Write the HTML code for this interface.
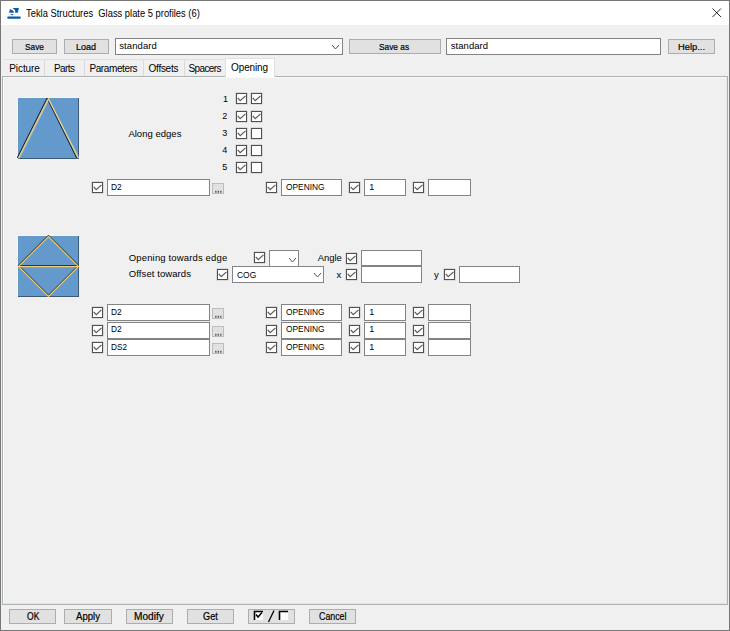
<!DOCTYPE html>
<html><head><meta charset="utf-8"><style>
*{margin:0;padding:0;box-sizing:border-box}
html,body{width:730px;height:631px;overflow:hidden;background:#f0f0f0;font-family:"Liberation Sans",sans-serif;color:#000}
.a{position:absolute}
.t{position:absolute;white-space:nowrap;line-height:20px}
.btn{position:absolute;background:#e1e1e1;border:1px solid #adadad}
.tb{position:absolute;background:#fff;border:1px solid #838383}
.cb{position:absolute;width:11px;height:11px;border:1px solid #505050;background:#fff;box-shadow:0 0 0 0.4px rgba(80,80,80,.35)}
.cb svg{position:absolute;left:0;top:0}
</style></head><body>
<div class="a" style="left:0;top:0;width:730px;height:631px;border:1px solid #777;"></div>
<div class="a" style="left:1px;top:1px;width:728px;height:24px;background:#fff"></div>
<svg class="a" style="left:0px;top:0px" width="24" height="22" viewBox="0 0 24 22">
<path d="M9.9,9 L13.6,10.9 L13.75,12.65 L9.2,12.65 Z" fill="#0b5aa2"/>
<path d="M12.4,8.1 L18.9,8.1 L17.8,12.65 L15.3,12.65 L15,10 Z" fill="#0b5aa2"/>
<path d="M10.4,14 L13.75,14 L12,15.5 Z" fill="#0b5aa2"/>
<rect x="7.2" y="16.4" width="13.6" height="2.4" rx="1" fill="#0b5aa2"/>
</svg>
<div class="t" style="left:25.50px;top:2.86px;font-size:10.5px;transform:scaleX(0.8916);transform-origin:0.00px 0;color:#000;">Tekla&nbsp;Structures&nbsp;&nbsp;Glass&nbsp;plate&nbsp;5&nbsp;profiles&nbsp;(6)</div>
<svg class="a" style="left:712px;top:8px" width="10" height="10"><path d="M0.5,0.5 L9,9 M9,0.5 L0.5,9" stroke="#222" stroke-width="0.95"/></svg>
<div class="btn" style="left:12px;top:39px;width:45px;height:15px"></div>
<div class="t" style="left:24.90px;top:37.21px;font-size:9.5px;transform:scaleX(0.8726);transform-origin:0.00px 0;color:#000;-webkit-text-stroke:0.2px #000">Save</div>
<div class="btn" style="left:64px;top:39px;width:45px;height:15px"></div>
<div class="t" style="left:76.30px;top:37.21px;font-size:9.5px;transform:scaleX(0.9462);transform-origin:0.00px 0;color:#000;-webkit-text-stroke:0.2px #000">Load</div>
<div class="tb" style="left:115px;top:38px;width:228px;height:17px"></div>
<div class="t" style="left:119.30px;top:36.21px;font-size:9.5px;letter-spacing:0.078px;color:#000;">standard</div>
<svg class="a" style="left:331px;top:44px" width="9" height="6"><polyline points="1,1 4.5,5 8,1" fill="none" stroke="#555" stroke-width="1"/></svg>
<div class="btn" style="left:349px;top:39px;width:92px;height:15px"></div>
<div class="t" style="left:378.90px;top:37.21px;font-size:9.5px;transform:scaleX(0.8765);transform-origin:0.00px 0;color:#000;-webkit-text-stroke:0.2px #000">Save as</div>
<div class="tb" style="left:446px;top:38px;width:215px;height:17px"></div>
<div class="t" style="left:450.80px;top:36.21px;font-size:9.5px;letter-spacing:0.049px;color:#000;">standard</div>
<div class="btn" style="left:668px;top:39px;width:47px;height:15px"></div>
<div class="t" style="left:678.30px;top:37.21px;font-size:9.5px;transform:scaleX(0.9834);transform-origin:0.00px 0;color:#000;-webkit-text-stroke:0.2px #000">Help...</div>
<div class="a" style="left:4px;top:59px;width:222px;height:1px;background:#e0e0e0"></div>
<div class="a" style="left:44px;top:60px;width:1px;height:16px;background:#dadada"></div>
<div class="a" style="left:84px;top:60px;width:1px;height:16px;background:#dadada"></div>
<div class="a" style="left:143px;top:60px;width:1px;height:16px;background:#dadada"></div>
<div class="a" style="left:184px;top:60px;width:1px;height:16px;background:#dadada"></div>
<div class="a" style="left:2px;top:76px;width:726px;height:529px;border:1px solid #aab2b2;background:#f0f0f0"></div>
<div class="a" style="left:3px;top:77px;width:724px;height:527px;border-left:1px solid #fafafa;border-top:1px solid #fafafa;border-right:1px solid #e4e6e6;border-bottom:1px solid #e4e6e6"></div>
<div class="a" style="left:225px;top:58px;width:50px;height:19px;background:#fff;border:1px solid #e0e0e0;border-bottom:none"></div>
<div class="t" style="left:9.20px;top:59.03px;font-size:10px;letter-spacing:-0.067px;color:#000;">Picture</div>
<div class="t" style="left:53.90px;top:59.03px;font-size:10px;letter-spacing:-0.562px;color:#000;">Parts</div>
<div class="t" style="left:89.40px;top:59.03px;font-size:10px;letter-spacing:-0.389px;color:#000;">Parameters</div>
<div class="t" style="left:148.60px;top:59.03px;font-size:10px;letter-spacing:-0.283px;color:#000;">Offsets</div>
<div class="t" style="left:188.50px;top:59.03px;font-size:10px;letter-spacing:-0.617px;color:#000;">Spacers</div>
<div class="t" style="left:231.10px;top:58.03px;font-size:10px;letter-spacing:-0.133px;color:#000;">Opening</div>
<svg class="a" style="left:17px;top:97px" width="63" height="63" viewBox="0 0 63 63">
<rect x="0" y="0" width="62" height="62" fill="#f8f6f2"/>
<rect x="1" y="1" width="61" height="61" fill="#3c5a78"/>
<rect x="1" y="1" width="60" height="60" fill="#6499cc"/>
<polyline points="0.1,61 30.1,1" fill="none" stroke="#1a1a1a" stroke-width="1"/><polyline points="30.1,1.2 59.7,61" fill="none" stroke="#1a1a1a" stroke-width="1"/>
<polyline points="1.5,61.2 31.5,1.4 61.3,61.2" fill="none" stroke="#f0cc74" stroke-width="1.1"/>
<polyline points="2.5,61.2 31.7,3 62.3,61.2" fill="none" stroke="#fff0c8" stroke-width="0.6" opacity="0.6"/>
</svg>
<div class="t" style="left:128.40px;top:124.21px;font-size:9.5px;letter-spacing:0.018px;color:#000;">Along edges</div>
<div class="t" style="left:222.90px;top:89.38px;font-size:9px;letter-spacing:0.000px;color:#000;">1</div>
<div class="cb" style="left:235.5px;top:93px"><svg width="9" height="9" viewBox="0 0 9 9"><polyline points="0.7,3.9 3.2,6.7 8.5,1.9" fill="none" stroke="#5a5a5a" stroke-width="1.25"/></svg></div>
<div class="cb" style="left:250.5px;top:93px"><svg width="9" height="9" viewBox="0 0 9 9"><polyline points="0.7,3.9 3.2,6.7 8.5,1.9" fill="none" stroke="#5a5a5a" stroke-width="1.25"/></svg></div>
<div class="t" style="left:222.20px;top:106.38px;font-size:9px;letter-spacing:0.000px;color:#000;">2</div>
<div class="cb" style="left:235.5px;top:111px"><svg width="9" height="9" viewBox="0 0 9 9"><polyline points="0.7,3.9 3.2,6.7 8.5,1.9" fill="none" stroke="#5a5a5a" stroke-width="1.25"/></svg></div>
<div class="cb" style="left:250.5px;top:111px"><svg width="9" height="9" viewBox="0 0 9 9"><polyline points="0.7,3.9 3.2,6.7 8.5,1.9" fill="none" stroke="#5a5a5a" stroke-width="1.25"/></svg></div>
<div class="t" style="left:222.20px;top:123.38px;font-size:9px;letter-spacing:0.000px;color:#000;">3</div>
<div class="cb" style="left:235.5px;top:128px"><svg width="9" height="9" viewBox="0 0 9 9"><polyline points="0.7,3.9 3.2,6.7 8.5,1.9" fill="none" stroke="#5a5a5a" stroke-width="1.25"/></svg></div>
<div class="cb" style="left:250.5px;top:128px"></div>
<div class="t" style="left:222.20px;top:140.38px;font-size:9px;letter-spacing:0.000px;color:#000;">4</div>
<div class="cb" style="left:235.5px;top:145px"><svg width="9" height="9" viewBox="0 0 9 9"><polyline points="0.7,3.9 3.2,6.7 8.5,1.9" fill="none" stroke="#5a5a5a" stroke-width="1.25"/></svg></div>
<div class="cb" style="left:250.5px;top:145px"></div>
<div class="t" style="left:222.20px;top:157.38px;font-size:9px;letter-spacing:0.000px;color:#000;">5</div>
<div class="cb" style="left:235.5px;top:162px"><svg width="9" height="9" viewBox="0 0 9 9"><polyline points="0.7,3.9 3.2,6.7 8.5,1.9" fill="none" stroke="#5a5a5a" stroke-width="1.25"/></svg></div>
<div class="cb" style="left:250.5px;top:162px"></div>
<div class="cb" style="left:92px;top:182px"><svg width="9" height="9" viewBox="0 0 9 9"><polyline points="0.7,3.9 3.2,6.7 8.5,1.9" fill="none" stroke="#5a5a5a" stroke-width="1.25"/></svg></div>
<div class="tb" style="left:107px;top:179px;width:103px;height:17px"></div>
<div class="t" style="left:111.30px;top:177.38px;font-size:9px;transform:scaleX(0.9288);transform-origin:0.00px 0;color:#000;">D2</div>
<div class="btn" style="left:212px;top:183px;width:12px;height:11px;border-color:#bdbdbd"></div>
<svg class="a" style="left:212px;top:183px" width="12" height="11"><rect x="3.3" y="7.8" width="1.1" height="1.9" fill="#3a3050"/><rect x="5.7" y="7.8" width="1.1" height="1.9" fill="#3a3050"/><rect x="8.3" y="7.8" width="1.1" height="1.9" fill="#3a3050"/></svg>
<div class="cb" style="left:266px;top:182px"><svg width="9" height="9" viewBox="0 0 9 9"><polyline points="0.7,3.9 3.2,6.7 8.5,1.9" fill="none" stroke="#5a5a5a" stroke-width="1.25"/></svg></div>
<div class="tb" style="left:281px;top:179px;width:61px;height:17px"></div>
<div class="t" style="left:285.80px;top:177.38px;font-size:9px;transform:scaleX(0.9303);transform-origin:0.00px 0;color:#000;">OPENING</div>
<div class="cb" style="left:349px;top:182px"><svg width="9" height="9" viewBox="0 0 9 9"><polyline points="0.7,3.9 3.2,6.7 8.5,1.9" fill="none" stroke="#5a5a5a" stroke-width="1.25"/></svg></div>
<div class="tb" style="left:364px;top:179px;width:42px;height:17px"></div>
<div class="t" style="left:369.20px;top:177.38px;font-size:9px;letter-spacing:0.000px;color:#000;">1</div>
<div class="cb" style="left:413px;top:182px"><svg width="9" height="9" viewBox="0 0 9 9"><polyline points="0.7,3.9 3.2,6.7 8.5,1.9" fill="none" stroke="#5a5a5a" stroke-width="1.25"/></svg></div>
<div class="tb" style="left:428px;top:179px;width:43px;height:17px"></div>
<svg class="a" style="left:17px;top:235px" width="63" height="63" viewBox="0 0 63 63">
<rect x="0" y="0" width="62" height="62" fill="#f8f6f2"/>
<rect x="1" y="1" width="61" height="61" fill="#3c5a78"/>
<rect x="1" y="1" width="60" height="60" fill="#6499cc"/>
<polygon points="31.5,0.2 61.5,30.2 31.5,60.2 1.5,30.2" fill="none" stroke="#1a1a1a" stroke-width="1"/>
<line x1="1" y1="30.5" x2="61" y2="30.5" stroke="#2a2a2a" stroke-width="0.9"/>
<polygon points="31.5,1.5 61.5,31.5 31.5,61.5 1.5,31.5" fill="none" stroke="#f0cc74" stroke-width="1.1"/>
<line x1="1.5" y1="31.7" x2="61" y2="31.7" stroke="#f0cc74" stroke-width="1.2"/>
</svg>
<div class="t" style="left:128.80px;top:248.21px;font-size:9.5px;letter-spacing:0.146px;color:#000;">Opening towards edge</div>
<div class="t" style="left:128.80px;top:264.21px;font-size:9.5px;letter-spacing:0.086px;color:#000;">Offset towards</div>
<div class="cb" style="left:254px;top:252px"><svg width="9" height="9" viewBox="0 0 9 9"><polyline points="0.7,3.9 3.2,6.7 8.5,1.9" fill="none" stroke="#5a5a5a" stroke-width="1.25"/></svg></div>
<div class="tb" style="left:269px;top:250px;width:30px;height:17px"></div>
<svg class="a" style="left:287.5px;top:256.5px" width="9" height="6"><polyline points="1,1 4.5,5 8,1" fill="none" stroke="#555" stroke-width="1"/></svg>
<div class="t" style="left:317.80px;top:248.21px;font-size:9.5px;letter-spacing:-0.055px;color:#000;">Angle</div>
<div class="cb" style="left:345.5px;top:252.5px"><svg width="9" height="9" viewBox="0 0 9 9"><polyline points="0.7,3.9 3.2,6.7 8.5,1.9" fill="none" stroke="#5a5a5a" stroke-width="1.25"/></svg></div>
<div class="tb" style="left:360.5px;top:250px;width:61px;height:16px"></div>
<div class="cb" style="left:217px;top:269px"><svg width="9" height="9" viewBox="0 0 9 9"><polyline points="0.7,3.9 3.2,6.7 8.5,1.9" fill="none" stroke="#5a5a5a" stroke-width="1.25"/></svg></div>
<div class="tb" style="left:232px;top:266px;width:92px;height:17px"></div>
<div class="t" style="left:236.70px;top:265.21px;font-size:9.5px;transform:scaleX(0.8910);transform-origin:0.00px 0;color:#000;">COG</div>
<svg class="a" style="left:312.5px;top:272px" width="9" height="6"><polyline points="1,1 4.5,5 8,1" fill="none" stroke="#555" stroke-width="1"/></svg>
<div class="t" style="left:336.50px;top:265.21px;font-size:9.5px;letter-spacing:0.000px;color:#000;">x</div>
<div class="cb" style="left:345.5px;top:269px"><svg width="9" height="9" viewBox="0 0 9 9"><polyline points="0.7,3.9 3.2,6.7 8.5,1.9" fill="none" stroke="#5a5a5a" stroke-width="1.25"/></svg></div>
<div class="tb" style="left:360.5px;top:266px;width:61px;height:17px"></div>
<div class="t" style="left:433.90px;top:265.21px;font-size:9.5px;letter-spacing:0.000px;color:#000;">y</div>
<div class="cb" style="left:444px;top:269px"><svg width="9" height="9" viewBox="0 0 9 9"><polyline points="0.7,3.9 3.2,6.7 8.5,1.9" fill="none" stroke="#5a5a5a" stroke-width="1.25"/></svg></div>
<div class="tb" style="left:459px;top:266px;width:61px;height:17px"></div>
<div class="cb" style="left:92px;top:307px"><svg width="9" height="9" viewBox="0 0 9 9"><polyline points="0.7,3.9 3.2,6.7 8.5,1.9" fill="none" stroke="#5a5a5a" stroke-width="1.25"/></svg></div>
<div class="tb" style="left:107px;top:304px;width:103px;height:17px"></div>
<div class="t" style="left:111.30px;top:302.38px;font-size:9px;transform:scaleX(0.9288);transform-origin:0.00px 0;color:#000;">D2</div>
<div class="btn" style="left:212px;top:308px;width:12px;height:11px;border-color:#bdbdbd"></div>
<svg class="a" style="left:212px;top:308px" width="12" height="11"><rect x="3.3" y="7.8" width="1.1" height="1.9" fill="#3a3050"/><rect x="5.7" y="7.8" width="1.1" height="1.9" fill="#3a3050"/><rect x="8.3" y="7.8" width="1.1" height="1.9" fill="#3a3050"/></svg>
<div class="cb" style="left:266px;top:307px"><svg width="9" height="9" viewBox="0 0 9 9"><polyline points="0.7,3.9 3.2,6.7 8.5,1.9" fill="none" stroke="#5a5a5a" stroke-width="1.25"/></svg></div>
<div class="tb" style="left:281px;top:304px;width:61px;height:17px"></div>
<div class="t" style="left:285.80px;top:302.38px;font-size:9px;transform:scaleX(0.9303);transform-origin:0.00px 0;color:#000;">OPENING</div>
<div class="cb" style="left:349px;top:307px"><svg width="9" height="9" viewBox="0 0 9 9"><polyline points="0.7,3.9 3.2,6.7 8.5,1.9" fill="none" stroke="#5a5a5a" stroke-width="1.25"/></svg></div>
<div class="tb" style="left:364px;top:304px;width:42px;height:17px"></div>
<div class="t" style="left:369.20px;top:302.38px;font-size:9px;letter-spacing:0.000px;color:#000;">1</div>
<div class="cb" style="left:413px;top:307px"><svg width="9" height="9" viewBox="0 0 9 9"><polyline points="0.7,3.9 3.2,6.7 8.5,1.9" fill="none" stroke="#5a5a5a" stroke-width="1.25"/></svg></div>
<div class="tb" style="left:428px;top:304px;width:43px;height:17px"></div>
<div class="cb" style="left:92px;top:324.5px"><svg width="9" height="9" viewBox="0 0 9 9"><polyline points="0.7,3.9 3.2,6.7 8.5,1.9" fill="none" stroke="#5a5a5a" stroke-width="1.25"/></svg></div>
<div class="tb" style="left:107px;top:321.5px;width:103px;height:17px"></div>
<div class="t" style="left:111.30px;top:319.38px;font-size:9px;transform:scaleX(0.9288);transform-origin:0.00px 0;color:#000;">D2</div>
<div class="btn" style="left:212px;top:325.5px;width:12px;height:11px;border-color:#bdbdbd"></div>
<svg class="a" style="left:212px;top:325.5px" width="12" height="11"><rect x="3.3" y="7.8" width="1.1" height="1.9" fill="#3a3050"/><rect x="5.7" y="7.8" width="1.1" height="1.9" fill="#3a3050"/><rect x="8.3" y="7.8" width="1.1" height="1.9" fill="#3a3050"/></svg>
<div class="cb" style="left:266px;top:324.5px"><svg width="9" height="9" viewBox="0 0 9 9"><polyline points="0.7,3.9 3.2,6.7 8.5,1.9" fill="none" stroke="#5a5a5a" stroke-width="1.25"/></svg></div>
<div class="tb" style="left:281px;top:321.5px;width:61px;height:17px"></div>
<div class="t" style="left:285.80px;top:319.38px;font-size:9px;transform:scaleX(0.9303);transform-origin:0.00px 0;color:#000;">OPENING</div>
<div class="cb" style="left:349px;top:324.5px"><svg width="9" height="9" viewBox="0 0 9 9"><polyline points="0.7,3.9 3.2,6.7 8.5,1.9" fill="none" stroke="#5a5a5a" stroke-width="1.25"/></svg></div>
<div class="tb" style="left:364px;top:321.5px;width:42px;height:17px"></div>
<div class="t" style="left:369.20px;top:319.38px;font-size:9px;letter-spacing:0.000px;color:#000;">1</div>
<div class="cb" style="left:413px;top:324.5px"><svg width="9" height="9" viewBox="0 0 9 9"><polyline points="0.7,3.9 3.2,6.7 8.5,1.9" fill="none" stroke="#5a5a5a" stroke-width="1.25"/></svg></div>
<div class="tb" style="left:428px;top:321.5px;width:43px;height:17px"></div>
<div class="cb" style="left:92px;top:342px"><svg width="9" height="9" viewBox="0 0 9 9"><polyline points="0.7,3.9 3.2,6.7 8.5,1.9" fill="none" stroke="#5a5a5a" stroke-width="1.25"/></svg></div>
<div class="tb" style="left:107px;top:339px;width:103px;height:17px"></div>
<div class="t" style="left:111.30px;top:337.38px;font-size:9px;transform:scaleX(0.9140);transform-origin:0.00px 0;color:#000;">DS2</div>
<div class="btn" style="left:212px;top:343px;width:12px;height:11px;border-color:#bdbdbd"></div>
<svg class="a" style="left:212px;top:343px" width="12" height="11"><rect x="3.3" y="7.8" width="1.1" height="1.9" fill="#3a3050"/><rect x="5.7" y="7.8" width="1.1" height="1.9" fill="#3a3050"/><rect x="8.3" y="7.8" width="1.1" height="1.9" fill="#3a3050"/></svg>
<div class="cb" style="left:266px;top:342px"><svg width="9" height="9" viewBox="0 0 9 9"><polyline points="0.7,3.9 3.2,6.7 8.5,1.9" fill="none" stroke="#5a5a5a" stroke-width="1.25"/></svg></div>
<div class="tb" style="left:281px;top:339px;width:61px;height:17px"></div>
<div class="t" style="left:285.80px;top:337.38px;font-size:9px;transform:scaleX(0.9303);transform-origin:0.00px 0;color:#000;">OPENING</div>
<div class="cb" style="left:349px;top:342px"><svg width="9" height="9" viewBox="0 0 9 9"><polyline points="0.7,3.9 3.2,6.7 8.5,1.9" fill="none" stroke="#5a5a5a" stroke-width="1.25"/></svg></div>
<div class="tb" style="left:364px;top:339px;width:42px;height:17px"></div>
<div class="t" style="left:369.20px;top:337.38px;font-size:9px;letter-spacing:0.000px;color:#000;">1</div>
<div class="cb" style="left:413px;top:342px"><svg width="9" height="9" viewBox="0 0 9 9"><polyline points="0.7,3.9 3.2,6.7 8.5,1.9" fill="none" stroke="#5a5a5a" stroke-width="1.25"/></svg></div>
<div class="tb" style="left:428px;top:339px;width:43px;height:17px"></div>
<div class="btn" style="left:9px;top:609px;width:47px;height:15px"></div>
<div class="t" style="left:26.70px;top:607.03px;font-size:10px;transform:scaleX(0.8581);transform-origin:0.00px 0;color:#000;-webkit-text-stroke:0.2px #000">OK</div>
<div class="btn" style="left:64px;top:609px;width:48px;height:15px"></div>
<div class="t" style="left:76.20px;top:607.03px;font-size:10px;transform:scaleX(0.9600);transform-origin:0.00px 0;color:#000;-webkit-text-stroke:0.2px #000">Apply</div>
<div class="btn" style="left:126px;top:609px;width:47px;height:15px"></div>
<div class="t" style="left:134.30px;top:607.03px;font-size:10px;transform:scaleX(1.0119);transform-origin:0.00px 0;color:#000;-webkit-text-stroke:0.2px #000">Modify</div>
<div class="btn" style="left:187px;top:609px;width:47px;height:15px"></div>
<div class="t" style="left:202.70px;top:607.03px;font-size:10px;transform:scaleX(0.9193);transform-origin:0.00px 0;color:#000;-webkit-text-stroke:0.2px #000">Get</div>
<div class="btn" style="left:309px;top:609px;width:47px;height:15px"></div>
<div class="t" style="left:318.60px;top:607.03px;font-size:10px;transform:scaleX(0.8828);transform-origin:0.00px 0;color:#000;-webkit-text-stroke:0.2px #000">Cancel</div>
<div class="btn" style="left:248px;top:609px;width:47px;height:15px"></div>
<svg class="a" style="left:253px;top:610px" width="38" height="13" viewBox="0 0 38 13">
<rect x="1" y="1" width="9" height="9" fill="#fff"/>
<path d="M1.5,10 L1.5,1.5 L10,1.5" fill="none" stroke="#000" stroke-width="1.6"/>
<polyline points="3,4.5 5,7 9,2.5" fill="none" stroke="#000" stroke-width="1.5"/>
<line x1="21" y1="0.5" x2="15.5" y2="12" stroke="#000" stroke-width="1.3"/>
<rect x="26" y="1" width="9" height="9" fill="#fff"/>
<path d="M26.5,10 L26.5,1.5 L35,1.5" fill="none" stroke="#000" stroke-width="1.6"/>
</svg>
</body></html>
